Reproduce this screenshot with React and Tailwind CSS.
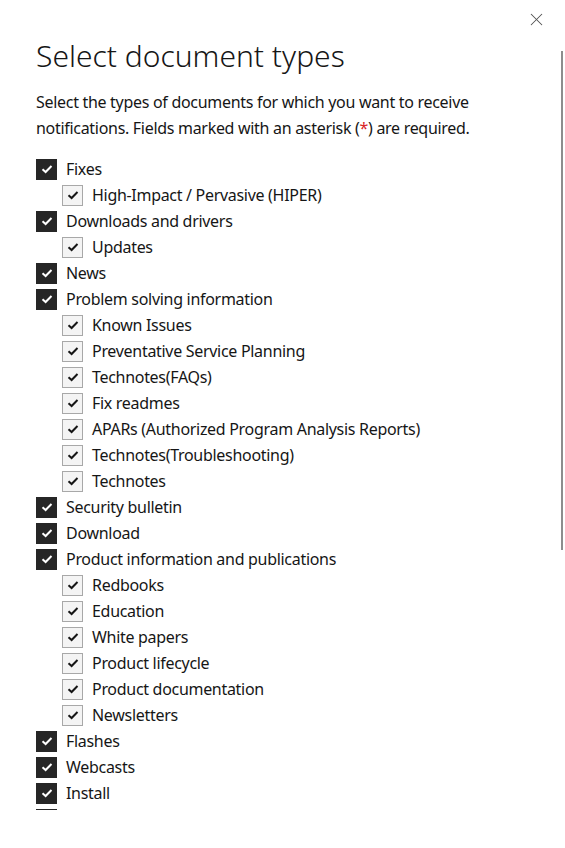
import { X } from 'lucide-react'

const tipos = [
  { label: 'Fixes', hijos: ['High-Impact / Pervasive (HIPER)'] },
  { label: 'Downloads and drivers', hijos: ['Updates'] },
  { label: 'News' },
  {
    label: 'Problem solving information',
    hijos: [
      'Known Issues',
      'Preventative Service Planning',
      'Technotes(FAQs)',
      'Fix readmes',
      'APARs (Authorized Program Analysis Reports)',
      'Technotes(Troubleshooting)',
      'Technotes',
    ],
  },
  { label: 'Security bulletin' },
  { label: 'Download' },
  {
    label: 'Product information and publications',
    hijos: [
      'Redbooks',
      'Education',
      'White papers',
      'Product lifecycle',
      'Product documentation',
      'Newsletters',
    ],
  },
  { label: 'Flashes' },
  { label: 'Webcasts' },
  { label: 'Install' },
  { label: 'Other' },
]

function Check({ oscuro }) {
  return (
    <span
      className={
        oscuro
          ? 'flex h-[21px] w-[21px] shrink-0 items-center justify-center bg-[#262626]'
          : 'flex h-[21px] w-[21px] shrink-0 items-center justify-center border border-[#a8a8a8] bg-[#f4f4f4]'
      }
    >
      <svg width="12" height="10" viewBox="0 0 12 10" aria-hidden="true">
        <path
          d="M1.5 5.2 L4.6 8 L10.5 2"
          fill="none"
          stroke={oscuro ? '#ffffff' : '#161616'}
          strokeWidth="2"
        />
      </svg>
    </span>
  )
}

function Fila({ label, nivel }) {
  return (
    <li
      className={
        nivel === 0
          ? 'flex h-[26px] items-center gap-[9px]'
          : 'flex h-[26px] items-center gap-[9px] pl-[26px]'
      }
    >
      <Check oscuro={nivel === 0} />
      <span className="text-[16px] leading-[26px] tracking-[-0.3px] text-[#161616]">{label}</span>
    </li>
  )
}

export default function App() {
  return (
    <div className="relative h-[848px] w-[565px] overflow-hidden bg-white font-['Noto_Sans',sans-serif] text-[#161616]">
      <button className="absolute right-[17px] top-[7px] flex h-[24px] w-[24px] items-center justify-center text-[#525252]">
        <X size={21} strokeWidth={1.2} />
      </button>

      <div className="h-[810px] overflow-hidden pl-9 pr-6 pt-[36px]">
        <h2 className="text-[30px] font-light leading-[40px]">Select document types</h2>
        <p className="mt-[13px] text-[16px] leading-[26px] tracking-[-0.3px]">
          Select the types of documents for which you want to receive notifications. Fields
          marked with an asterisk (<span className="text-[#da1e28]">*</span>) are required.
        </p>
        <ul className="mt-[15px]">
          {tipos.map((t) => (
            <>
              <Fila key={t.label} label={t.label} nivel={0} />
              {(t.hijos || []).map((h) => (
                <Fila key={h} label={h} nivel={1} />
              ))}
            </>
          ))}
        </ul>
      </div>

      <div className="absolute right-[2px] top-[51px] h-[499px] w-[2px] bg-[#8d8d8d]" />
    </div>
  )
}
